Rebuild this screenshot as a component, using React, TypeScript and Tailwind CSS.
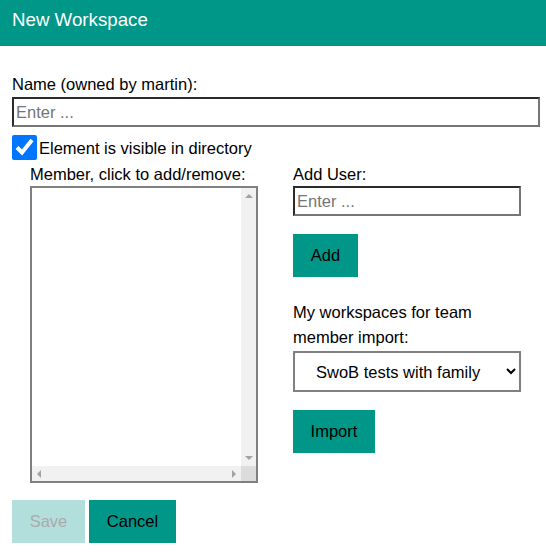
import { useState } from "react";

const inputCls =
  "h-[30px] border-2 border-t-[#2b2b2b] border-l-[#2b2b2b] border-r-[#767676] border-b-[#767676] bg-white px-[2px] text-[16.5px] text-black outline-none placeholder:text-[#757575]";

const btnCls = "h-[43px] bg-[#009688] text-center text-[16.5px] text-black";

function Arrow({ dir }: { dir: "up" | "down" | "left" | "right" }) {
  const pts = {
    up: "0,4 4,0 8,4",
    down: "0,0 8,0 4,4",
    left: "4,0 4,8 0,4",
    right: "0,0 4,4 0,8",
  }[dir];
  const vertical = dir === "up" || dir === "down";
  return (
    <svg width={vertical ? 8 : 4} height={vertical ? 4 : 8} viewBox={vertical ? "0 0 8 4" : "0 0 4 8"}>
      <polygon points={pts} fill="#a3a3a3" />
    </svg>
  );
}

function ListBox() {
  return (
    <div className="mt-[2px] flex h-[297px] w-[228px] flex-col border-2 border-[#808080] bg-white">
      <div className="flex flex-1">
        <div className="flex-1" />
        <div className="flex w-[15px] flex-col items-center justify-between bg-[#f1f1f1] py-[6px]">
          <Arrow dir="up" />
          <Arrow dir="down" />
        </div>
      </div>
      <div className="flex h-[15px]">
        <div className="flex flex-1 items-center justify-between bg-[#f1f1f1] px-[5px]">
          <Arrow dir="left" />
          <Arrow dir="right" />
        </div>
        <div className="w-[15px] bg-[#dcdcdc]" />
      </div>
    </div>
  );
}

export default function App() {
  const [name, setName] = useState("");
  const [user, setUser] = useState("");
  const [visible, setVisible] = useState(true);

  return (
    <div className="min-h-[556px] w-[546px] bg-white font-['Liberation_Sans',Arial,sans-serif] text-[16.5px] text-black">
      <header className="h-[46px] bg-[#009688] pl-[12px] pt-[9px]">
        <h3 className="text-[18.72px] leading-[22px] text-white">New Workspace</h3>
      </header>

      <main className="px-[12px] pt-[28px]">
        <label className="block leading-[20px]">Name (owned by martin):</label>
        <input
          className={`${inputCls} mt-[3px] block w-[528px]`}
          placeholder="Enter ..."
          value={name}
          onChange={(e) => setName(e.target.value)}
        />

        <label className="mt-[8px] flex h-[25px] items-center gap-[2px]">
          <input
            type="checkbox"
            className="m-0 h-[25px] w-[25px]"
            checked={visible}
            onChange={(e) => setVisible(e.target.checked)}
          />
          <span className="leading-[20px]">Element is visible in directory</span>
        </label>

        <div className="mt-[4px] flex gap-[35px] pl-[18px]">
          <div className="w-[228px]">
            <div className="leading-[20px]">Member, click to add/remove:</div>
            <ListBox />
          </div>

          <div className="w-[228px]">
            <div className="leading-[20px]">Add User:</div>
            <input
              className={`${inputCls} mt-[2px] block w-[228px]`}
              placeholder="Enter ..."
              value={user}
              onChange={(e) => setUser(e.target.value)}
            />
            <button className={`${btnCls} mt-[18px] block w-[65px]`}>Add</button>

            <div className="mt-[23px] leading-[25px]">My workspaces for team member import:</div>
            <select className="mt-[1px] block h-[41px] w-[228px] border-2 border-[#808080] bg-white pl-[17px] text-[16.5px] text-black">
              <option>SwoB tests with family</option>
            </select>
            <button className={`${btnCls} mt-[18px] block h-[42px] w-[82px]`}>Import</button>
          </div>
        </div>

        <div className="mt-[17px] flex gap-[4px]">
          <button disabled className="h-[43px] w-[73px] bg-[#b2dfdb] text-[16.5px] text-[#aaaaaa]">
            Save
          </button>
          <button className={`${btnCls} w-[87px]`}>Cancel</button>
        </div>
      </main>
    </div>
  );
}
